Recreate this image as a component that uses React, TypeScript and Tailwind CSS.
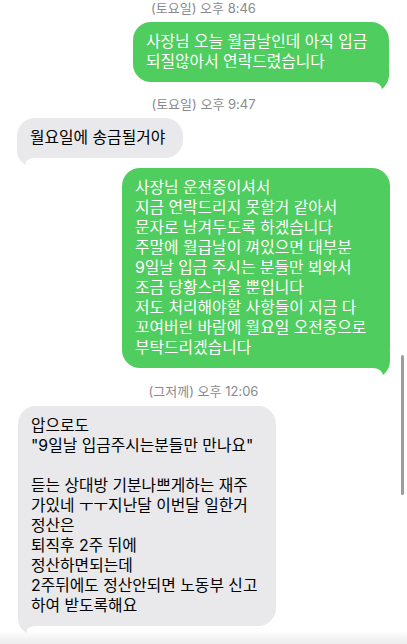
import React from 'react';

const font = "font-['Inter','Noto_Sans_CJK_KR',sans-serif]";

function Stamp({ children, className = '' }: { children: React.ReactNode; className?: string }) {
    return (
        <div className={`text-center text-[13px] leading-[14px] text-[#8a8a8e] ${className}`}>{children}</div>
    );
}

function Tail({ side, color }: { side: 'left' | 'right'; color: string }) {
    // little hook under the bubble corner
    if (side === 'right') {
        return (
            <svg className="absolute right-0 bottom-[-7px]" width="22" height="23" viewBox="0 0 22 23">
                <path d="M0 0 L22 0 L22 8 C22 14 20 19 15 23 C14 19 11 16 4 16 L0 16 Z" fill={color} />
            </svg>
        );
    }
    return (
        <svg className="absolute left-0 bottom-[-7px]" width="22" height="23" viewBox="0 0 22 23">
            <path d="M22 0 L0 0 L0 8 C0 14 2 19 9 23 C8 19 11 16 18 16 L22 16 Z" fill={color} />
        </svg>
    );
}

function Bubble({
    lines,
    mine,
    width,
}: {
    lines: string[];
    mine?: boolean;
    width: string;
}) {
    const bg = mine ? '#4fcd5e' : '#e9e9eb';
    return (
        <div
            className={`relative rounded-[18px] px-[13px] py-[10px] text-[15.8px] leading-[20px] ${width} ${
                mine ? 'bg-[#4fcd5e] text-white' : 'bg-[#e9e9eb] text-black'
            }`}
        >
            <div className="relative z-10">
                {lines.map((l, i) => (
                    <div key={i} className="whitespace-nowrap h-[20px]">
                        {l}
                    </div>
                ))}
            </div>
            <Tail side={mine ? 'right' : 'left'} color={bg} />
        </div>
    );
}

export default function App() {
    return (
        <div className={`relative w-full h-[644px] bg-white overflow-hidden ${font}`}>
            <div className="flex flex-col">
                <Stamp className="pt-[1px] mb-[7px]">(토요일) 오후 8:46</Stamp>
                <div className="flex justify-end pr-[18px]">
                    <Bubble
                        mine
                        width="w-[256px]"
                        lines={['사장님 오늘 월급날인데 아직 입금', '되질않아서 연락드렸습니다']}
                    />
                </div>

                <Stamp className="mt-[15px] mb-[7px]">(토요일) 오후 9:47</Stamp>
                <div className="flex justify-start pl-[17px]">
                    <Bubble width="w-[166px]" lines={['월요일에 송금될거야']} />
                </div>

                <div className="flex justify-end pr-[17px] mt-[10px]">
                    <Bubble
                        mine
                        width="w-[268px]"
                        lines={[
                            '사장님 운전중이셔서',
                            '지금 연락드리지 못할거 같아서',
                            '문자로 남겨두도록 하겠습니다',
                            '주말에 월급날이 껴있으면 대부분',
                            '9일날 입금 주시는 분들만 뵈와서',
                            '조금 당황스러울 뿐입니다',
                            '저도 처리해야할 사항들이 지금 다',
                            '꼬여버린 바람에 월요일 오전중으로',
                            '부탁드리겠습니다',
                        ]}
                    />
                </div>

                <Stamp className="mt-[16px] mb-[8px]">(그저께) 오후 12:06</Stamp>
                <div className="flex justify-start pl-[18px]">
                    <Bubble
                        width="w-[258px]"
                        lines={[
                            '압으로도',
                            '"9일날 입금주시는분들만 만나요"',
                            '',
                            '듣는 상대방 기분나쁘게하는 재주',
                            '가있네 ㅜㅜ지난달 이번달 일한거',
                            '정산은',
                            '퇴직후 2주 뒤에',
                            '정산하면되는데',
                            '2주뒤에도 정산안되면 노동부 신고',
                            '하여 받도록해요',
                        ]}
                    />
                </div>
            </div>

            {/* scroll indicator */}
            <div className="absolute right-[3px] top-[355px] w-[3px] h-[140px] rounded-full bg-[#9d9d9d]" />
            {/* bottom shade */}
            <div className="absolute left-0 right-0 bottom-0 h-[13px] bg-gradient-to-b from-white/0 to-[#ececec]" />
        </div>
    );
}
